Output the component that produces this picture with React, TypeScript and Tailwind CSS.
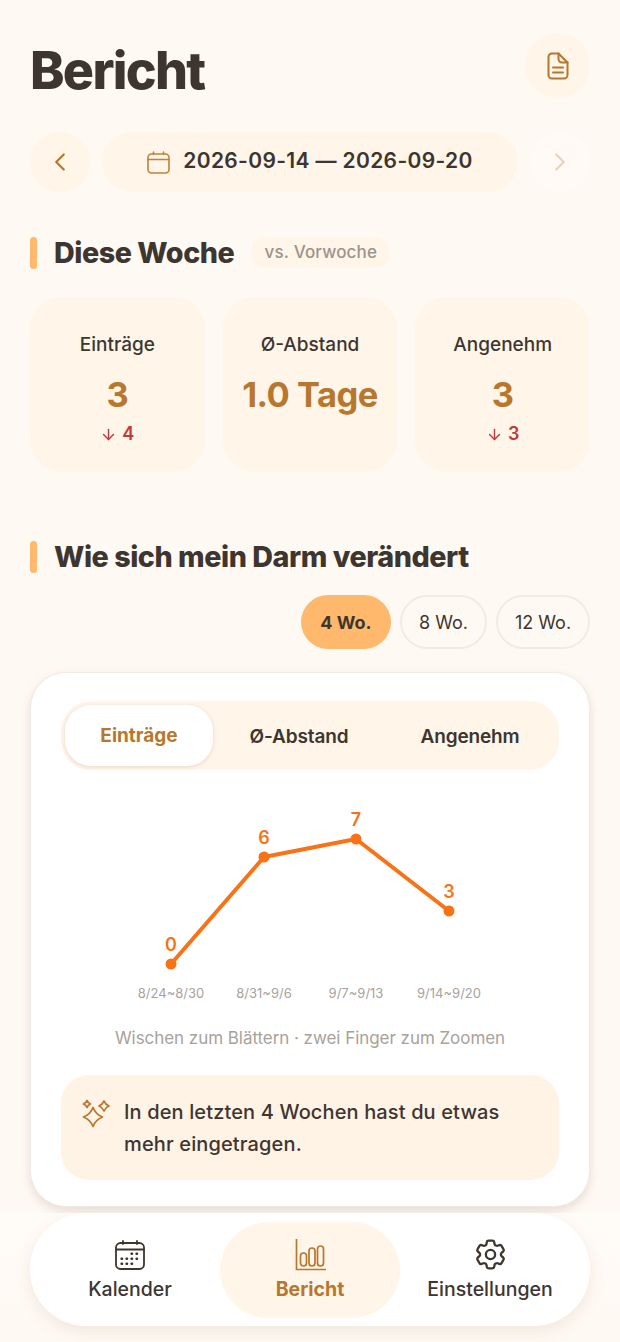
import { HiOutlineChevronLeft, HiOutlineChevronRight, HiOutlineCog6Tooth } from "react-icons/hi2";
import { LuArrowDown } from "react-icons/lu";

const font = { fontFamily: "Inter, sans-serif" };

const points = [
  { x: 110, y: 174, value: 0, label: "8/24~8/30" },
  { x: 203, y: 67, value: 6, label: "8/31~9/6" },
  { x: 295, y: 49, value: 7, label: "9/7~9/13" },
  { x: 388, y: 121, value: 3, label: "9/14~9/20" },
];

function star(cx: number, cy: number, r: number) {
  const c = r * 0.28;
  return `M${cx} ${cy - r}Q${cx + c} ${cy - c} ${cx + r} ${cy}Q${cx + c} ${cy + c} ${cx} ${cy + r}Q${cx - c} ${cy + c} ${cx - r} ${cy}Q${cx - c} ${cy - c} ${cx} ${cy - r}Z`;
}

function SectionTitle({ title, children }: { title: string; children?: React.ReactNode }) {
  return (
    <div className="flex items-center">
      <div className="h-8 w-[7px] rounded-full bg-[#ffb86c]" />
      <h2 className="ml-[17px] text-[28.7px] leading-8 font-extrabold tracking-[-0.45px] text-[#3d3630]">{title}</h2>
      {children}
    </div>
  );
}

function StatCard({ label, value, delta }: { label: string; value: string; delta?: string }) {
  return (
    <div className="flex h-[175px] flex-col items-center rounded-[32px] bg-[#fff5e9] pt-[34px]">
      <div className="text-[19px] leading-[28px] font-medium text-[#3d3630]">{label}</div>
      <div className="mt-[14px] text-[34.5px] leading-[44px] font-bold tracking-[-0.5px] text-[#b7772d]">{value}</div>
      {delta && (
        <div className="mt-[5px] flex items-center gap-[5px] text-[18px] leading-6 font-semibold text-[#c0393b]">
          <LuArrowDown className="h-[17px] w-[17px]" />
          {delta}
        </div>
      )}
    </div>
  );
}

function RangePill({ label, active, width }: { label: string; active?: boolean; width: string }) {
  return (
    <div
      className={
        active
          ? `flex h-[54px] items-center justify-center rounded-[27px] bg-[#ffb86c] text-[18px] font-bold text-[#3d3630] ${width}`
          : `flex h-[54px] items-center justify-center rounded-[27px] border-2 border-[#f0ebe5] text-[18px] font-normal text-[#3d3630] ${width}`
      }
    >
      {label}
    </div>
  );
}

function NavItem({ label, icon, active }: { label: string; icon: React.ReactNode; active?: boolean }) {
  return (
    <div
      className={
        active
          ? "flex h-[96px] w-[180px] flex-col items-center justify-center rounded-[48px] bg-[#fff5e9] text-[#b7772d]"
          : "flex h-[96px] w-[180px] flex-col items-center justify-center text-[#3d3630]"
      }
    >
      <div className="flex h-[32px] items-center justify-center">{icon}</div>
      <div className={active ? "mt-[6px] text-[19.5px] leading-6 font-bold" : "mt-[6px] text-[19.5px] leading-6 font-medium"}>{label}</div>
    </div>
  );
}

export default function App() {
  return (
    <div className="relative h-[1342px] w-[620px] overflow-hidden bg-[#fff9f3] px-[30px]" style={font}>
      <div className="flex items-start justify-between pt-[33px]">
        <h1 className="mt-[7px] text-[52px] leading-[62px] font-extrabold tracking-[-1.7px] text-[#3d3630]">Bericht</h1>
        <div className="flex h-[65px] w-[65px] items-center justify-center rounded-full bg-[#fff5e9]">
          <svg width="22" height="28" viewBox="0 0 22 28" fill="none" stroke="#b7772d" strokeWidth="2" strokeLinecap="round" strokeLinejoin="round">
            <path d="M5 1.5h6.5l9 9V23a3.5 3.5 0 0 1-3.5 3.5H5A3.5 3.5 0 0 1 1.5 23V5A3.5 3.5 0 0 1 5 1.5z" />
            <path d="M11.5 1.5V7a3.5 3.5 0 0 0 3.5 3.5h5.5" />
            <path d="M6 15.5h10M6 20.5h10" />
          </svg>
        </div>
      </div>

      <div className="mt-[30px] flex items-center gap-[12px]">
        <div className="flex h-[60px] w-[60px] items-center justify-center rounded-full bg-[#fff5e9]">
          <HiOutlineChevronLeft className="h-[24px] w-[24px] text-[#b7772d] [&_path]:stroke-[2.2]" />
        </div>
        <div className="flex h-[60px] flex-1 items-center justify-center gap-[13px] rounded-[30px] bg-[#fff5e9]">
          <svg width="23" height="23" viewBox="0 0 23 23" fill="none" stroke="#c0813a" strokeWidth="1.6" strokeLinecap="round">
            <rect x="1" y="3" width="21" height="19" rx="3.5" />
            <path d="M1 8.5h21M6.5 1v2M16.5 1v2" />
          </svg>
          <span className="-mt-[2px] text-[21px] font-semibold tracking-[0.35px] text-[#3d3630]">2026-09-14 — 2026-09-20</span>
        </div>
        <div className="flex h-[60px] w-[60px] items-center justify-center rounded-full bg-[#fffaf5]">
          <HiOutlineChevronRight className="h-[24px] w-[24px] text-[#e7d3bd] [&_path]:stroke-[2.2]" />
        </div>
      </div>

      <div className="mt-[45px]">
        <SectionTitle title="Diese Woche">
          <span className="ml-[17px] flex h-[30px] w-[139px] items-center justify-center rounded-[15px] bg-[#fff5e9] text-[17px] font-medium tracking-[0.15px] text-[#9c948b]">
            vs. Vorwoche
          </span>
        </SectionTitle>
      </div>

      <div className="mt-[28px] grid grid-cols-3 gap-[18px]">
        <StatCard label="Einträge" value="3" delta="4" />
        <StatCard label="Ø-Abstand" value="1.0 Tage" />
        <StatCard label="Angenehm" value="3" delta="3" />
      </div>

      <div className="mt-[69px]">
        <SectionTitle title="Wie sich mein Darm verändert" />
      </div>

      <div className="mt-[22px] flex justify-end gap-[9px]">
        <RangePill label="4 Wo." active width="w-[90px]" />
        <RangePill label="8 Wo." width="w-[87px]" />
        <RangePill label="12 Wo." width="w-[94px]" />
      </div>

      <div className="mt-[23px] h-[535px] rounded-[36px] border border-[#f0ebe5] bg-white px-[30px] pt-[28px] shadow-[0_4px_10px_rgba(100,80,60,0.16)]">
        <div className="flex h-[69px] items-center rounded-[30px] bg-[#fff5e9] px-[4px] text-[19px] font-semibold">
          <div className="flex h-[61px] w-[148px] items-center justify-center rounded-[26px] bg-white pt-[2px] font-bold text-[#b7772d] shadow-[0_1px_4px_rgba(120,90,50,0.18)]">
            Einträge
          </div>
          <div className="flex flex-1 justify-center pt-[3px] tracking-[-0.15px] text-[#3d3630]">Ø-Abstand</div>
          <div className="flex w-[170px] justify-center pt-[3px] tracking-[-0.15px] text-[#3d3630]">Angenehm</div>
        </div>

        <svg className="mt-[20px] block" width="498" height="220" viewBox="0 0 498 220">
          <polyline
            points={points.map((p) => `${p.x},${p.y}`).join(" ")}
            fill="none"
            stroke="#f97316"
            strokeWidth="4"
            strokeLinejoin="round"
          />
          {points.map((p) => (
            <g key={p.label}>
              <circle cx={p.x} cy={p.y} r="5.5" fill="#f97316" />
              <text x={p.x} y={p.y - 13} textAnchor="middle" fontSize="18" fontWeight="600" fill="#f97316">
                {p.value}
              </text>
              <text x={p.x} y="208" textAnchor="middle" fontSize="13" fill="#a8a29e">
                {p.label}
              </text>
            </g>
          ))}
        </svg>

        <div className="mt-[16px] text-center text-[17px] leading-6 tracking-[-0.05px] text-[#a8a29b]">
          Wischen zum Blättern · zwei Finger zum Zoomen
        </div>

        <div className="mt-[25px] flex h-[105px] rounded-[28px] bg-[#fff3e6] pt-[20px] pl-[19px]">
          <svg className="shrink-0" width="30" height="34" viewBox="0 0 30 34" fill="none" stroke="#b7772d" strokeWidth="1.8" strokeLinejoin="round">
            <path d={star(13, 22, 9.5)} />
            <path d={star(24, 11, 5)} />
            <path d={star(7, 9, 3.5)} />
          </svg>
          <p className="ml-[14px] mt-[1px] text-[20px] leading-[32px] font-medium tracking-[0.13px] text-[#3d3630]">
            In den letzten 4 Wochen hast du etwas
            <br />
            mehr eingetragen.
          </p>
        </div>
      </div>

      {/* Bottom nav */}
      <div className="absolute right-0 bottom-0 left-0 h-[129px] bg-gradient-to-b from-[#fffbf7] to-[#fff9f3] px-[30px]">
        <div className="flex h-[113px] items-center justify-center rounded-[56px] bg-white shadow-[0_6px_16px_rgba(120,90,50,0.1)]">
          <NavItem
            label="Kalender"
            icon={
              <svg width="30" height="30" viewBox="0 0 30 30" fill="none" stroke="currentColor" strokeWidth="1.8" strokeLinecap="round">
                <rect x="1" y="3" width="28" height="26" rx="4.5" />
                <path d="M1 9.5h28M8 1v3M22 1v3" />
                <g fill="currentColor" stroke="none">
                  <rect x="15.5" y="12.5" width="2.6" height="2.6" rx="0.8" />
                  <rect x="20.5" y="12.5" width="2.6" height="2.6" rx="0.8" />
                  <rect x="5.5" y="17.5" width="2.6" height="2.6" rx="0.8" />
                  <rect x="10.5" y="17.5" width="2.6" height="2.6" rx="0.8" />
                  <rect x="15.5" y="17.5" width="2.6" height="2.6" rx="0.8" />
                  <rect x="20.5" y="17.5" width="2.6" height="2.6" rx="0.8" />
                  <rect x="5.5" y="22.5" width="2.6" height="2.6" rx="0.8" />
                  <rect x="10.5" y="22.5" width="2.6" height="2.6" rx="0.8" />
                  <rect x="15.5" y="22.5" width="2.6" height="2.6" rx="0.8" />
                </g>
              </svg>
            }
          />
          <NavItem
            label="Bericht"
            active
            icon={
              <svg width="31" height="32" viewBox="0 0 31 32" fill="none" stroke="currentColor" strokeWidth="1.7">
                <path d="M1.5 0v30.5H31" />
                <rect x="5.5" y="14" width="6" height="13" rx="3" />
                <rect x="14" y="9" width="6" height="18" rx="3" />
                <rect x="22.5" y="7" width="6" height="20" rx="3" />
              </svg>
            }
          />
          <NavItem label="Einstellungen" icon={<HiOutlineCog6Tooth className="h-[37px] w-[37px]" />} />
        </div>
      </div>
    </div>
  );
}
